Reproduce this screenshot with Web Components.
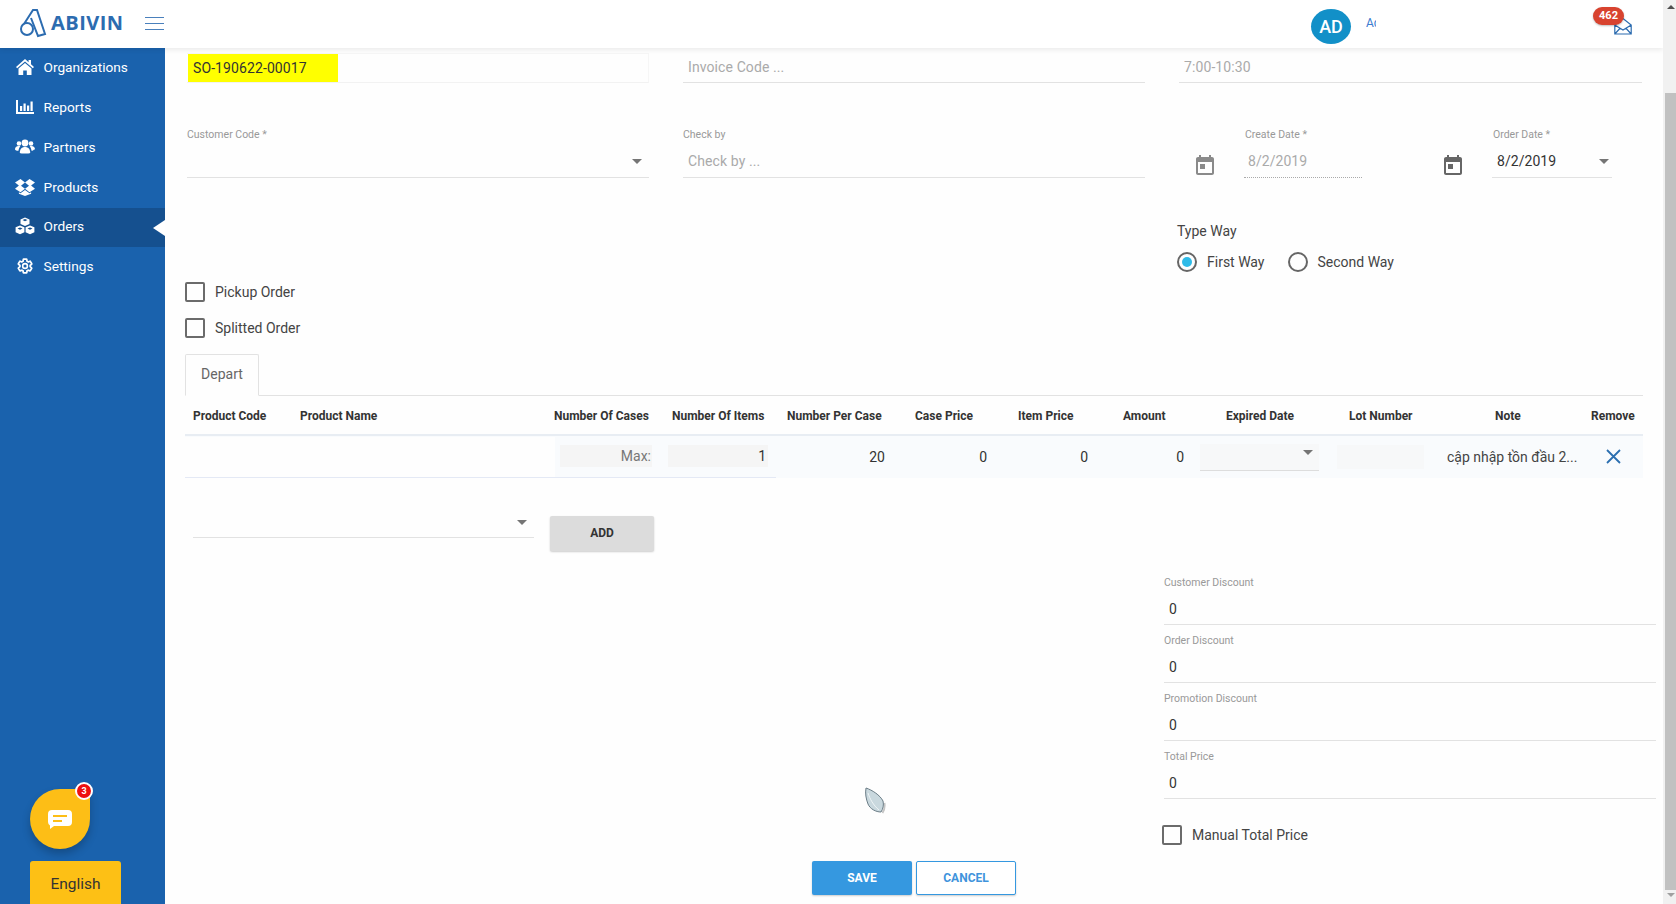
<!DOCTYPE html>
<html lang="en">
<head>
<meta charset="utf-8">
<title>Abivin Orders</title>
<style>
  html, body { margin: 0; height: 904px; overflow: hidden; background: #fefefe; font-family: Roboto, "Noto Sans", sans-serif; }
</style>
</head>
<body>
<ab-app></ab-app>
<script>
const ICONS = {
  home: `<path d="M10 2 1 10l1.2 1.3L10 4.6l7.8 6.7L19 10l-3-2.700V3h-2.400v2.200z"/><path d="M10 6 3.500 11.600V18h4.700v-4.500h3.600V18h4.700v-6.400z"/>`,
  chart: `<path d="M1 3h2v12h16v2H1z"/><path d="M5 9h2.200v5H5zM8.500 6.500h2.200V14H8.500zM12 8.500h2.200V14H12zM15.500 4.500h2.200V14h-2.200z"/>`,
  users: `<circle cx="10" cy="6" r="3.400"/><circle cx="4" cy="6.500" r="2.300"/><circle cx="16" cy="6.500" r="2.300"/><path d="M4.800 16c0-4 2-6 5.200-6s5.200 2 5.200 6c-1 .8-9.400.8-10.400 0z"/><path d="M0 12.500c0-2 1.200-3.400 3.800-3.400.6 0 1.100.1 1.500.3-1 1-1.600 2.300-1.800 4.400C1.500 13.800.4 13.300 0 12.500zM20 12.500c0-2-1.200-3.400-3.800-3.400-.6 0-1.100.1-1.500.3 1 1 1.600 2.300 1.800 4.400 1 0 2.100-.5 2.500-1.300z"/>`,
  dropbox: `<path d="M5.500 2 0 5.600l3.900 3L0 11.700l5.500 3.500 4.500-3.400-4-3.100 4-3.100zM14.500 2 20 5.600l-3.900 3 3.900 3.100-5.500 3.500-4.500-3.400 4-3.100-4-3.100z"/><path d="M5.500 16.200 10 13l4.500 3.200 1.600-.9v1.400L10 19l-6.100-2.300v-1.400z"/>`,
  cubes: `<path d="M10 1.500 14.500 3.500V8L10 10 5.500 8V3.500z"/><path d="M5 9.500 9.400 11.300v5L5 18.300.6 16.300v-5z"/><path d="M15 9.500 19.400 11.300v5L15 18.300l-4.400-2v-5z"/><path fill="#15508f" d="M5 11.500 7.500 12.600 5 13.700 2.500 12.600zM15 11.500l2.500 1.100-2.500 1.100-2.500-1.100zM10 3l2.500 1.100-2.500 1.100-2.500-1.100z"/>`,
  cog: `<g transform="translate(1.400 1.400) scale(.72)"><path fill="none" stroke="#fff" stroke-width="2.400" d="M19.140 12.940c.04-.3.06-.61.06-.94 0-.32-.02-.64-.07-.94l2.030-1.580c.18-.14.23-.41.12-.61l-1.920-3.320c-.12-.22-.37-.29-.59-.22l-2.390.96c-.5-.38-1.030-.7-1.620-.94l-.36-2.540c-.04-.24-.24-.41-.48-.41h-3.840c-.24 0-.43.17-.47.41l-.36 2.540c-.59.24-1.130.57-1.620.94l-2.390-.96c-.22-.08-.47 0-.59.22L2.740 8.870c-.12.21-.08.47.12.61l2.030 1.580c-.05.3-.09.63-.09.94s.02.64.07.94l-2.030 1.580c-.18.14-.23.41-.12.61l1.920 3.320c.12.22.37.29.59.22l2.390-.96c.5.38 1.030.7 1.620.94l.36 2.540c.05.24.24.41.48.41h3.840c.24 0 .44-.17.47-.41l.36-2.540c.59-.24 1.130-.56 1.620-.94l2.390.96c.22.08.47 0 .59-.22l1.920-3.320c.12-.22.07-.47-.12-.61z"/><circle cx="12" cy="12" r="3.300" fill="none" stroke="#fff" stroke-width="2.200"/></g>`
};

class AbApp extends HTMLElement {
  constructor() {
    super();
    this.attachShadow({ mode: "open" });
    this.shadowRoot.innerHTML = `
      <style>
        :host { display: flex; width: 1676px; height: 904px; overflow: hidden; color: #333; position: relative; }
        .left { flex: 1; display: flex; flex-direction: column; min-width: 0; }
        .body { flex: 1; display: flex; min-height: 0; }
        ab-sidebar { flex: 0 0 165px; }
        ab-order-form { flex: 1; min-width: 0; }
        .leaf { position: absolute; left: 865px; top: 787px; }
      </style>
      <div class="left">
        <ab-header></ab-header>
        <div class="body">
          <ab-sidebar></ab-sidebar>
          <ab-order-form></ab-order-form>
        </div>
      </div>
      <ab-scrollbar></ab-scrollbar>
      <svg class="leaf" width="21" height="28" viewBox="0 0 21 28">
        <path d="M19.500 16c.6 4 0 7-2 10" fill="none" stroke="#c4c4c4" stroke-width="1.800"/>
        <path d="M1 1C7 3 15 8 18 14c1 4 0 8-2 11-5 0-11-3-13-8C1 12 0 6 1 1z" fill="#c9d8de" stroke="#6a7c86" stroke-width="1"/>
        <path d="M3 6c2 6 5 12 11 17" fill="none" stroke="#eef4f6" stroke-width="1"/>
      </svg>
    `;
  }
}

class AbHeader extends HTMLElement {
  constructor() {
    super();
    this.attachShadow({ mode: "open" });
    this.shadowRoot.innerHTML = `
      <style>
        :host { display: flex; align-items: center; height: 48px; background: #fff; position: relative; z-index: 2; box-shadow: 0 2px 5px rgba(0,0,0,.08); flex: none; }
        .mark { margin-left: 18px; margin-top: -2px; }
        .name { font: 700 20px/1 "Open Sans", sans-serif; color: #2c6cb0; letter-spacing: .45px; margin-left: 3px; margin-top: -3px; }
        .burger { width: 19px; margin-left: 22px; margin-top: -1px; display: flex; flex-direction: column; gap: 5px; }
        .burger i { display: block; height: 1px; background: #4a80bc; }
        .avatar { width: 40px; height: 35px; border-radius: 50%; background: #1290c8; color: #fff; font-size: 18px; font-weight: 500; display: flex; align-items: center; justify-content: center; margin-left: auto; margin-top: 4px; }
        .user { width: 10px; overflow: hidden; white-space: nowrap; font-size: 12px; color: #3b7ccf; margin-left: 15px; margin-top: -3px; margin-right: 238px; }
        .mail { position: relative; width: 18px; height: 18px; margin-right: 31px; margin-top: 3px; }
        .mail b { position: absolute; right: 8px; top: -10px; background: #d8432f; color: #fff; font-size: 11px; font-weight: 700; padding: 2px 6px; border-radius: 9px; line-height: 14px; box-shadow: 0 1px 2px rgba(0,0,0,.25); }
      </style>
      <svg class="mark" width="30" height="32" viewBox="0 0 30 32" fill="none" stroke="#2c6cb0" stroke-width="2">
        <circle cx="9" cy="22" r="6"/>
        <path d="M6 17 15 3h4l8 24-7 2-7-18"/>
      </svg>
      <span class="name">ABIVIN</span>
      <div class="burger"><i></i><i></i><i></i></div>
      <div class="avatar">AD</div>
      <span class="user">Admin</span>
      <div class="mail">
        <svg width="18" height="18" viewBox="0 0 18 18" fill="none" stroke="#2c6cb0" stroke-width="1.200">
          <path d="M.8 8 9 1.500 17.200 8v9H.8zM.8 8 9 13l8.200-5M.8 17l5.500-6M17.200 17l-5.500-6"/>
        </svg>
        <b>462</b>
      </div>
    `;
  }
}

class AbSidebar extends HTMLElement {
  constructor() {
    super();
    this.attachShadow({ mode: "open" });
    this.shadowRoot.innerHTML = `
      <style>
        :host { display: flex; flex-direction: column; background: #1a62ad; }
        nav { display: flex; flex-direction: column; }
        .foot { margin-top: auto; padding-left: 30px; display: flex; flex-direction: column; align-items: flex-start; }
        .chat { width: 60px; height: 60px; background: #fdbe16; border-radius: 50% 5px 50% 50%; box-shadow: 0 5px 9px rgba(0,0,0,.22); position: relative; display: flex; align-items: center; justify-content: center; }
        .dot { position: absolute; right: -3px; top: -7px; width: 14px; height: 14px; border: 2px solid #fff; border-radius: 50%; background: #ee1111; color: #fff; font-size: 9px; font-weight: 700; line-height: 14px; text-align: center; }
        .lang { width: 91px; height: 41px; padding-top: 2px; margin-top: 12px; background: #fdc015; border-radius: 3px 3px 0 0; color: #333; font-size: 15.500px; display: flex; align-items: center; justify-content: center; }
      </style>
      <nav>
        <ab-nav-item icon="home">Organizations</ab-nav-item>
        <ab-nav-item icon="chart">Reports</ab-nav-item>
        <ab-nav-item icon="users">Partners</ab-nav-item>
        <ab-nav-item icon="dropbox">Products</ab-nav-item>
        <ab-nav-item icon="cubes" active>Orders</ab-nav-item>
        <ab-nav-item icon="cog">Settings</ab-nav-item>
      </nav>
      <div class="foot">
        <div class="chat">
          <svg width="24" height="19" viewBox="0 0 24 19">
            <path d="M4 0h16a4 4 0 0 1 4 4v8a4 4 0 0 1-4 4H6l-4 3v-3.500A4 4 0 0 1 0 12V4a4 4 0 0 1 4-4z" fill="#fff"/>
            <path d="M5 6h14M5 11h9" stroke="#fdbe16" stroke-width="1.800"/>
          </svg>
          <span class="dot">3</span>
        </div>
        <div class="lang">English</div>
      </div>
    `;
  }
}

class AbNavItem extends HTMLElement {
  constructor() {
    super();
    this.attachShadow({ mode: "open" });
    this.shadowRoot.innerHTML = `
      <style>
        :host { display: flex; align-items: center; box-sizing: border-box; height: 40px; padding-bottom: 2px; color: #fff; font-size: 13.700px; position: relative; }
        :host([active]) { height: 39px; padding-bottom: 3px; background: #15508f; }
        :host([active])::after { content: ""; position: absolute; right: 0; top: 12px; border: 8px solid transparent; border-right: 12px solid #fff; border-left: 0; }
        svg { width: 20px; height: 20px; margin-left: 15px; margin-right: 8.500px; fill: #fff; flex: none; }
      </style>
      <svg viewBox="0 0 20 20"></svg><slot></slot>
    `;
  }
  connectedCallback() {
    this.shadowRoot.querySelector("svg").innerHTML = ICONS[this.getAttribute("icon")] || "";
  }
}

class AbScrollbar extends HTMLElement {
  constructor() {
    super();
    this.attachShadow({ mode: "open" });
    this.shadowRoot.innerHTML = `
      <style>
        :host { display: flex; flex-direction: column; flex: 0 0 13px; height: 904px; background: #f1f1f1; position: relative; z-index: 3; }
        .up { width: 0; margin: 5px 0 0 4px; border: 4px solid transparent; border-top: 0; border-bottom: 4px solid #505050; }
        .thumb { height: 797px; margin: 84px 0 0 2px; background: #c1c1c1; }
        .down { width: 0; margin: 3px 0 0 4px; border: 4px solid transparent; border-bottom: 0; border-top: 4px solid #a0a0a0; }
      </style>
      <div class="up"></div><div class="thumb"></div><div class="down"></div>
    `;
  }
}

// label + control with a bottom line, kind = plain | select | dotted
class AbField extends HTMLElement {
  constructor() {
    super();
    this.attachShadow({ mode: "open" });
    this.shadowRoot.innerHTML = `
      <style>
        :host { display: block; font-size: 14px; }
        .label { font-size: 10.500px; line-height: 14px; color: #999; margin-bottom: 6px; white-space: nowrap; }
        .ctl { display: flex; align-items: center; height: 28px; border-bottom: 1px solid #e2e2e2; padding-left: 5px; padding-bottom: 1px; position: relative; }
        .label + .ctl { height: 26px; padding-bottom: 3px; }
        .val { color: #333; letter-spacing: .05px; white-space: nowrap; }
        .val.ph { color: #aaa; letter-spacing: .1px; }
        .arrow { margin-left: auto; margin-right: 7px; border: 5px solid transparent; border-bottom: 0; border-top: 5px solid #757575; }
        :host([kind="dotted"]) .ctl { border-bottom: 1px dotted #aaa; padding-left: 4px; }
        :host([kind="dotted"]) .val { color: #aaa; }
        :host([kind="dotted"]) .label, :host([tight]) .label { padding-left: 1px; }
        :host([tight]) .arrow { margin-right: 3px; }
      </style>
      <div class="label"></div>
      <div class="ctl"><span class="val"></span><i class="arrow"></i></div>
    `;
  }
  connectedCallback() {
    const root = this.shadowRoot;
    const label = this.getAttribute("label");
    if (label) root.querySelector(".label").textContent = label;
    else root.querySelector(".label").remove();
    const val = root.querySelector(".val");
    val.textContent = this.getAttribute("value") || this.getAttribute("placeholder") || "";
    if (this.hasAttribute("placeholder")) val.classList.add("ph");
    if (this.getAttribute("kind") !== "select") root.querySelector(".arrow").remove();
  }
}

class AbCheck extends HTMLElement {
  constructor() {
    super();
    this.attachShadow({ mode: "open" });
    this.shadowRoot.innerHTML = `
      <style>
        :host { display: flex; align-items: center; gap: 10px; height: 20px; font-size: 14px; color: #444; }
        i { width: 16px; height: 16px; border: 2px solid #6b6b6b; border-radius: 2px; flex: none; }
      </style>
      <i></i><slot></slot>
    `;
  }
}

class AbRadio extends HTMLElement {
  constructor() {
    super();
    this.attachShadow({ mode: "open" });
    this.shadowRoot.innerHTML = `
      <style>
        :host { display: flex; align-items: center; gap: 10px; height: 20px; font-size: 14px; color: #444; }
        i { width: 16px; height: 16px; border: 2px solid #666; border-radius: 50%; flex: none; display: flex; align-items: center; justify-content: center; }
        :host([checked]) i::after { content: ""; width: 10px; height: 10px; border-radius: 50%; background: #2fbbe8; }
      </style>
      <i></i><slot></slot>
    `;
  }
}

class AbButton extends HTMLElement {
  constructor() {
    super();
    this.attachShadow({ mode: "open" });
    this.shadowRoot.innerHTML = `
      <style>
        :host { display: flex; align-items: center; justify-content: center; box-sizing: border-box; width: 100px; height: 34px; border-radius: 2px; font-size: 12px; font-weight: 700; background: #3598e0; color: #fff; box-shadow: 0 1px 2px rgba(0,0,0,.2); }
        :host([kind="outline"]) { background: #fff; color: #3f94dc; border: 1px solid #3598e0; }
        :host([kind="grey"]) { width: 104px; height: 35px; padding-bottom: 2px; background: #dcdcdc; color: #333; }
      </style>
      <slot></slot>
    `;
  }
}

class AbOrderTable extends HTMLElement {
  constructor() {
    super();
    this.attachShadow({ mode: "open" });
    this.shadowRoot.innerHTML = `
      <style>
        :host { display: block; width: 1458px; font-size: 14px; }
        .head { display: grid; grid-template-columns: 107px 254px 118px 115px 128px 103px 105px 103px 123px 146px 96px 1fr; box-sizing: border-box; height: 40px; padding-top: 1px; align-items: center; padding-left: 8px; border-bottom: 2px solid #e8edf3; font-size: 12px; font-weight: 700; color: #333; white-space: nowrap; }
        .row { display: grid; grid-template-columns: 375px 112px 110px 103px 102px 101px 96px 151px 112px 1fr; height: 42px; align-items: center; background: #f9fbfd; position: relative; }
        .row::after { content: ""; position: absolute; left: 0; bottom: 0; width: 591px; border-bottom: 1px solid #e4e9f5; }
        .blank { height: 40px; margin-right: 5px; background: #fefefe; }
        .num { text-align: right; color: #333; margin-top: -1px; }
        .box { height: 22px; margin-top: -3px; background: #f5f5f5; display: flex; align-items: center; justify-content: flex-end; }
        .max { margin-right: 20px; padding-right: 1px; color: #777; }
        .items { margin: -3px 14px 0 -4px; padding-right: 2px; color: #333; }
        .exp { margin: 0 16px 0 16px; height: 27px; border-bottom: 1px solid #ddd; background: #f7f8f9; display: flex; justify-content: flex-end; align-items: flex-start; padding: 6px 6px 0 0; box-sizing: border-box; }
        .exp i { border: 5px solid transparent; border-bottom: 0; border-top: 5px solid #757575; }
        .lot { height: 24px; margin: -1px 23px 0 2px; background: #f7f8f9; }
        .note { color: #444; white-space: nowrap; display: flex; justify-content: space-between; align-items: center; padding-right: 21px; margin-top: -1px; }
        .x { flex: none; }
      </style>
      <div class="head">
        <span>Product Code</span><span>Product Name</span><span>Number Of Cases</span><span>Number Of Items</span>
        <span>Number Per Case</span><span>Case Price</span><span>Item Price</span><span>Amount</span>
        <span>Expired Date</span><span>Lot Number</span><span>Note</span><span>Remove</span>
      </div>
      <div class="row">
        <div class="blank"></div>
        <div class="box max">Max:</div>
        <div class="box items">1</div>
        <div class="num">20</div>
        <div class="num">0</div>
        <div class="num">0</div>
        <div class="num">0</div>
        <div class="exp"><i></i></div>
        <div class="lot"></div>
        <div class="note">cập nhập tồn đầu 2...
          <svg class="x" width="17" height="17" viewBox="0 0 17 17" fill="none" stroke="#2c6fb0" stroke-width="1.800"><path d="M2 2l13 13M15 2 2 15"/></svg>
        </div>
      </div>
    `;
  }
}

class AbOrderForm extends HTMLElement {
  constructor() {
    super();
    this.attachShadow({ mode: "open" });
    const calendar = (color) => `<svg class="cal" width="24" height="24" viewBox="0 0 24 24" fill="${color}"><path d="M19 3h-1V1h-2v2H8V1H6v2H5c-1.110 0-1.990.9-1.990 2L3 19c0 1.100.89 2 2 2h14c1.100 0 2-.9 2-2V5c0-1.100-.9-2-2-2zm0 16H5V8h14v11zM7 10h5v5H7z"/></svg>`;
    this.shadowRoot.innerHTML = `
      <style>
        :host { display: flex; flex-direction: column; padding-left: 20px; box-sizing: border-box; background: #fefefe; height: 856px; overflow: hidden; }
        .grid { display: grid; grid-template-columns: 462px 462px 463px; column-gap: 34px; margin-left: 2px; }
        .r1 { margin-top: 5px; }
        .so { display: flex; align-items: stretch; height: 28px; border: 1px solid #f6f6f6; border-left: 0; border-bottom-color: #f2f2f2; }
        .so span { width: 145px; margin-left: 1px; background: #ffff00; color: #333; padding-left: 5px; font-size: 14px; line-height: 28px; letter-spacing: .1px; }
        .r2 { margin-top: 45px; }
        .dates { display: flex; align-items: flex-end; margin-left: -1px; }
        .dates span { display: flex; flex: none; }
        .cal { position: relative; top: 0; }
        .d1 { margin-left: 15px; }
        .d2 { margin-left: 79px; }
        .dates ab-field:nth-of-type(1) { width: 118px; margin-left: 27px; }
        .dates ab-field:nth-of-type(2) { width: 120px; margin-left: 27px; }
        .mid { display: flex; justify-content: space-between; }
        .checks { display: flex; flex-direction: column; gap: 16px; margin-top: 104px; margin-bottom: 16px; }
        .way { margin-top: 44px; width: 463px; margin-right: 23px; }
        .way h4 { margin: 0 0 12px; font-size: 14px; font-weight: 400; color: #444; line-height: 18px; }
        .radios { display: flex; gap: 23px; }
        .tabs { box-sizing: border-box; border-bottom: 1px solid #e2e2e2; width: 1458px; height: 42px; }
        .tab { display: inline-flex; align-items: center; justify-content: center; box-sizing: border-box; width: 74px; height: 42px; padding-bottom: 2px; border: 1px solid #e2e2e2; border-bottom: 1px solid #fefefe; border-radius: 2px 2px 0 0; font-size: 14px; color: #666; background: #fefefe; }
        .add { display: flex; align-items: flex-start; margin-top: 30px; margin-left: 8px; }
        .add ab-field { width: 341px; }
        .add ab-button { margin: 8px 0 0 16px; }
        .totals { width: 492px; margin-left: 979px; margin-top: 26px; display: flex; flex-direction: column; }
        .amount { height: 58px; box-sizing: border-box; }
        .amount .lbl { font-size: 10.500px; color: #999; line-height: 12px; }
        .amount .val { height: 35px; line-height: 41px; padding-left: 5px; border-bottom: 1px solid #e2e2e2; font-size: 14px; color: #333; }
        .manual { margin: 16px 0 0 -2px; }
        .actions { display: flex; gap: 4px; margin-left: 627px; margin-top: 16px; }
      </style>
      <div class="grid r1">
        <div class="so"><span>SO-190622-00017</span></div>
        <ab-field placeholder="Invoice Code ..."></ab-field>
        <ab-field placeholder="7:00-10:30"></ab-field>
      </div>
      <div class="grid r2">
        <ab-field label="Customer Code *" kind="select"></ab-field>
        <ab-field label="Check by" placeholder="Check by ..."></ab-field>
        <div class="dates">
          <span class="d1">${calendar("#8a8a8a")}</span>
          <ab-field label="Create Date *" value="8/2/2019" kind="dotted"></ab-field>
          <span class="d2">${calendar("#666")}</span>
          <ab-field label="Order Date *" value="8/2/2019" kind="select" tight></ab-field>
        </div>
      </div>
      <div class="mid">
        <div class="checks">
          <ab-check>Pickup Order</ab-check>
          <ab-check>Splitted Order</ab-check>
        </div>
        <div class="way">
          <h4>Type Way</h4>
          <div class="radios">
            <ab-radio checked>First Way</ab-radio>
            <ab-radio>Second Way</ab-radio>
          </div>
        </div>
      </div>
      <div class="tabs"><span class="tab">Depart</span></div>
      <ab-order-table></ab-order-table>
      <div class="add">
        <ab-field kind="select"></ab-field>
        <ab-button kind="grey">ADD</ab-button>
      </div>
      <div class="totals">
        <div class="amount"><div class="lbl">Customer Discount</div><div class="val">0</div></div>
        <div class="amount"><div class="lbl">Order Discount</div><div class="val">0</div></div>
        <div class="amount"><div class="lbl">Promotion Discount</div><div class="val">0</div></div>
        <div class="amount"><div class="lbl">Total Price</div><div class="val">0</div></div>
        <ab-check class="manual">Manual Total Price</ab-check>
      </div>
      <div class="actions">
        <ab-button>SAVE</ab-button>
        <ab-button kind="outline">CANCEL</ab-button>
      </div>
    `;
  }
}

customElements.define("ab-app", AbApp);
customElements.define("ab-header", AbHeader);
customElements.define("ab-sidebar", AbSidebar);
customElements.define("ab-nav-item", AbNavItem);
customElements.define("ab-scrollbar", AbScrollbar);
customElements.define("ab-field", AbField);
customElements.define("ab-check", AbCheck);
customElements.define("ab-radio", AbRadio);
customElements.define("ab-button", AbButton);
customElements.define("ab-order-table", AbOrderTable);
customElements.define("ab-order-form", AbOrderForm);
</script>
</body>
</html>
